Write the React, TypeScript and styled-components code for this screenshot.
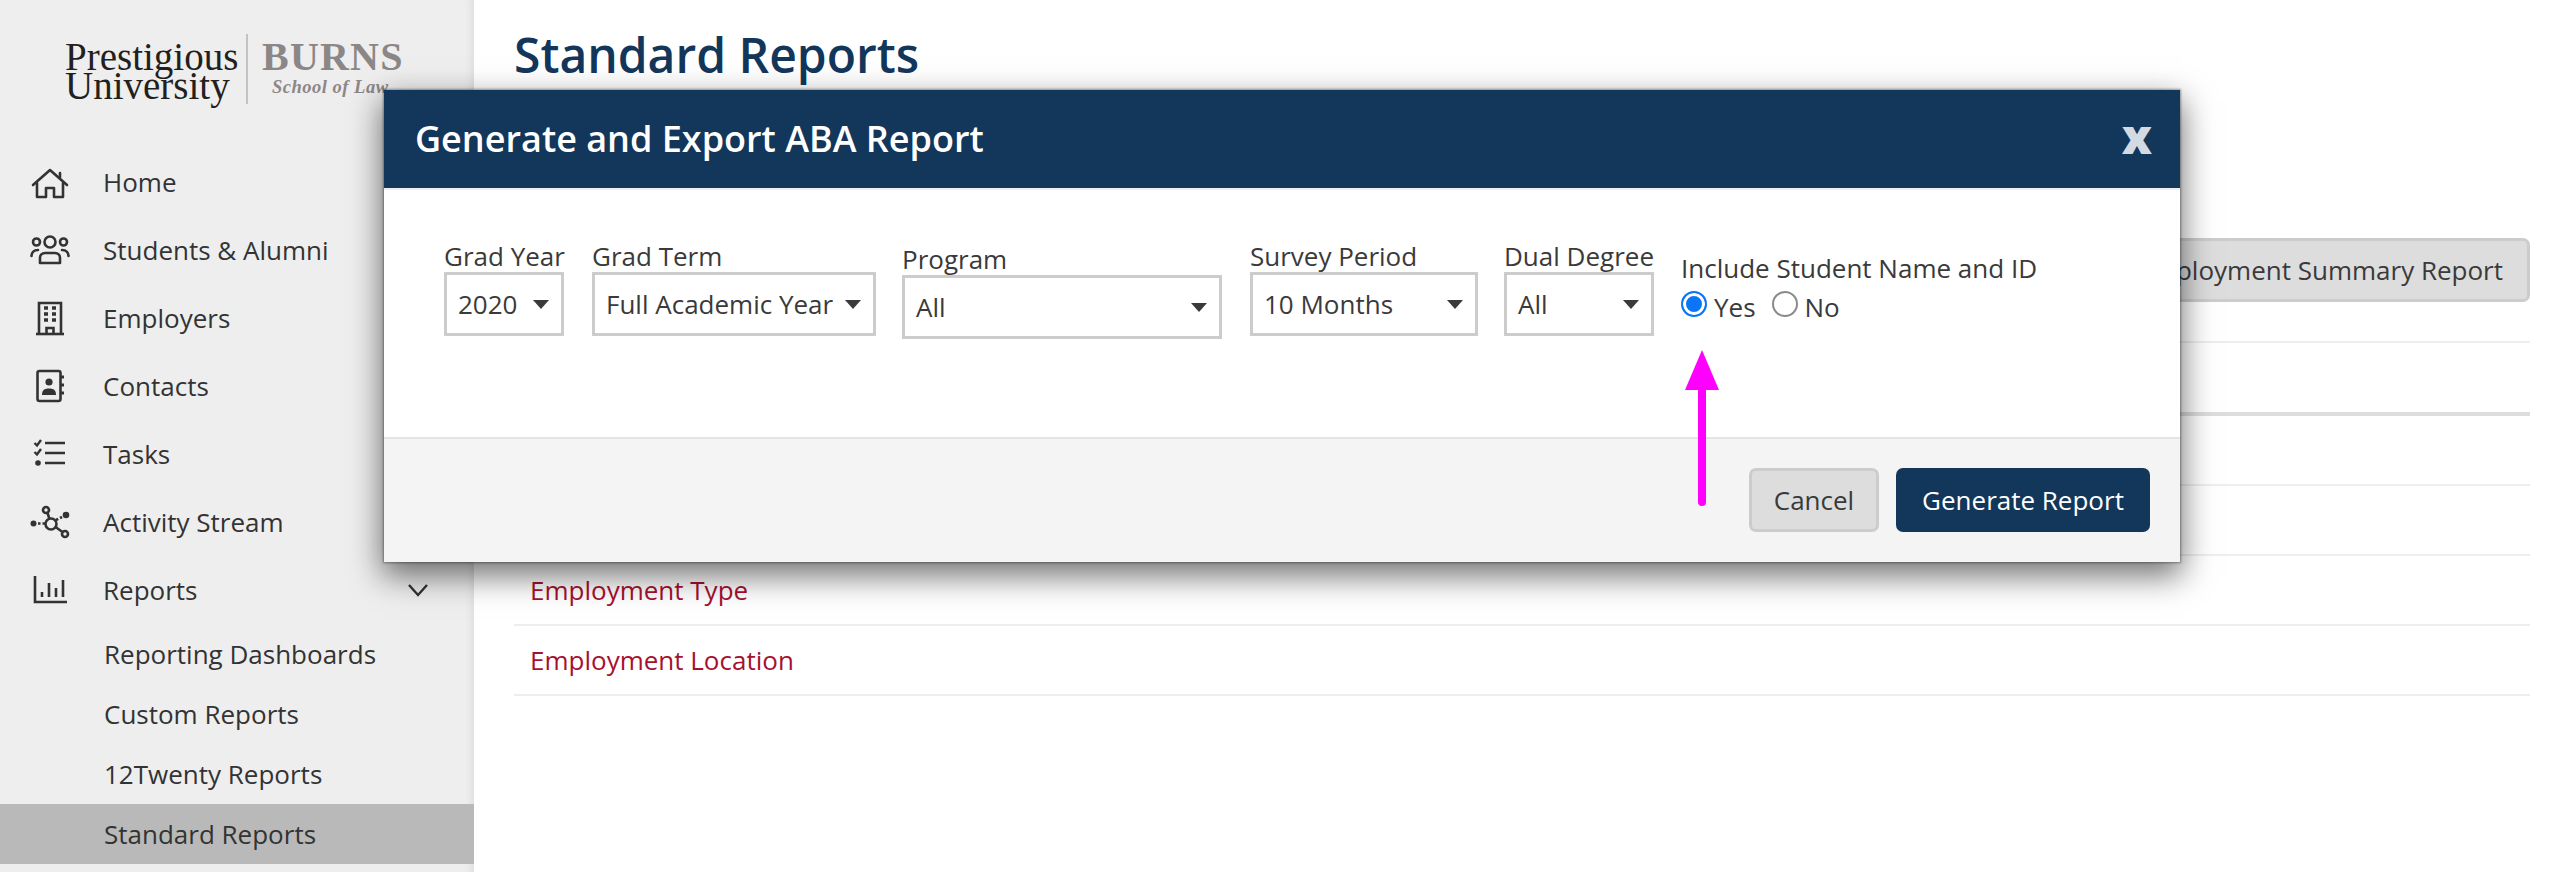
import React from "react";
import styled, { createGlobalStyle } from "styled-components";

const Global = createGlobalStyle`
  html, body { margin: 0; padding: 0; background: #fff; }
  body { font-family: "Open Sans", "Liberation Sans", sans-serif; color: #3a3a3a; }
  * { box-sizing: border-box; }
`;

const Page = styled.div`
  position: relative;
  display: grid;
  grid-template-columns: 474px 1fr;
  width: 2570px;
  height: 872px;
  overflow: hidden;
`;

const Sidebar = styled.aside`
  background: #eee;
  box-shadow: inset -8px 0 8px -6px rgba(0, 0, 0, 0.08);
  display: flex;
  flex-direction: column;
`;

const Logo = styled.div`
  height: 148px;
  padding: 34px 0 0 65px;
  display: flex;
  align-items: flex-start;
`;

const LogoUniversity = styled.div`
  font-family: "Liberation Serif", serif;
  font-size: 39px;
  line-height: 29px;
  color: #231f20;
  padding: 8px 0 0 0;
  width: 183px;
  height: 70px;
  border-right: 2px solid #c4c2c2;
  white-space: nowrap;
`;

const LogoSchool = styled.div`
  font-family: "Liberation Serif", serif;
  padding-left: 14px;
  white-space: nowrap;
`;

const LogoBurns = styled.div`
  font-weight: 700;
  font-size: 40px;
  line-height: 38px;
  letter-spacing: 1.2px;
  color: #8c8787;
  margin-top: 4px;
`;

const LogoLaw = styled.div`
  font-style: italic;
  font-weight: 700;
  font-size: 18.5px;
  line-height: 22px;
  letter-spacing: 0.5px;
  color: #8c8787;
  padding-left: 10px;
`;

const Nav = styled.nav`
  display: flex;
  flex-direction: column;
`;

const NavRow = styled.div`
  height: 68px;
  display: flex;
  align-items: center;
  padding-left: 30px;
  font-size: 26px;
  color: #333;
`;

const NavIconBox = styled.span`
  width: 40px;
  height: 36px;
  margin-right: 33px;
  flex: none;
  svg { display: block; }
`;

const NavChevron = styled.svg`
  margin-left: auto;
  margin-right: 45px;
`;

const SubRow = styled.div<{ $active?: boolean }>`
  height: 60px;
  display: flex;
  align-items: center;
  padding-left: 104px;
  font-size: 26px;
  color: #333;
  background: ${(p) => (p.$active ? "#b9b9b9" : "transparent")};
`;

const Main = styled.main`
  padding: 0 40px;
  display: flex;
  flex-direction: column;
`;

const Title = styled.h1`
  margin: 0;
  height: 238px;
  padding-top: 24px;
  font-size: 48px;
  line-height: 62px;
  font-weight: 600;
  color: #13365b;
`;

const Toolbar = styled.div`
  height: 105px;
  display: flex;
  justify-content: flex-end;
  align-items: flex-start;
  border-bottom: 2px solid #eee;
`;

const GrayButton = styled.button`
  height: 64px;
  padding: 0 24px;
  font: 400 26px "Open Sans", sans-serif;
  color: #3a3a3a;
  background: #ddd;
  border: 3px solid #ccc;
  border-radius: 7px;
`;

const HeaderRow = styled.div`
  height: 73px;
  border-bottom: 4px solid #ddd;
`;

const ReportRow = styled.div`
  height: 70px;
  display: flex;
  align-items: center;
  padding-left: 16px;
  font-size: 26px;
  color: #a6112f;
  border-bottom: 2px solid #eee;
`;

const Modal = styled.section`
  position: absolute;
  left: 384px;
  top: 90px;
  width: 1796px;
  height: 472px;
  background: #fff;
  display: flex;
  flex-direction: column;
  box-shadow: 0 0 2px 1px rgba(0, 0, 0, 0.35), 0 12px 30px 2px rgba(0, 0, 0, 0.55);
`;

const ModalHeader = styled.header`
  height: 100px;
  flex: none;
  padding: 0 28px 2px 31px;
  background: #13365b;
  border-bottom: 2px solid #eee;
  display: flex;
  align-items: center;
  justify-content: space-between;
`;

const ModalTitle = styled.h2`
  margin: 0;
  font-size: 36px;
  font-weight: 600;
  color: #fff;
`;

const CloseX = styled.span`
  font-family: "Open Sans", sans-serif;
  font-weight: 800;
  font-size: 48px;
  line-height: 48px;
  color: #d3dae3;
  margin-top: -5px;
`;

const ModalBody = styled.div`
  flex: 1;
  padding: 50px 0 0 60px;
  display: flex;
  align-items: flex-start;
`;

const Field = styled.div<{ $width: number; $after: number; $offset?: number }>`
  width: ${(p) => p.$width}px;
  margin-right: ${(p) => p.$after}px;
  margin-top: ${(p) => p.$offset ?? 0}px;
  flex: none;
`;

const FieldLabel = styled.div`
  font-size: 26px;
  line-height: 32px;
  color: #3a3a3a;
  white-space: nowrap;
`;

const SelectBox = styled.div`
  height: 64px;
  border: 3px solid #ccc;
  padding: 0 12px 0 11px;
  display: flex;
  align-items: center;
  justify-content: space-between;
  font-size: 26px;
  color: #3a3a3a;
  white-space: nowrap;
`;

const Caret = styled.span`
  width: 0;
  height: 0;
  flex: none;
  border-left: 8px solid transparent;
  border-right: 8px solid transparent;
  border-top: 9px solid #3a3a3a;
`;

const RadioGroup = styled.div`
  margin-top: 12px;
  flex: none;
`;

const RadioRow = styled.div`
  display: flex;
  align-items: center;
  height: 32px;
  margin-top: 7px;
  font-size: 26px;
  color: #3a3a3a;
`;

const RadioLabel = styled.label`
  display: flex;
  align-items: center;
  gap: 7px;
  margin-right: 16px;
`;

const RadioInput = styled.input`
  appearance: none;
  width: 26px;
  height: 26px;
  margin: -7px 0 0;
  border-radius: 50%;
  border: 2px solid #8a8a8a;
  background: #fff;
  &:checked {
    border: 2px solid #0b76f5;
    background: #0b76f5;
    box-shadow: inset 0 0 0 3px #fff;
  }
`;

const ModalFooter = styled.footer`
  height: 125px;
  flex: none;
  background: #f4f4f4;
  border-top: 2px solid #e4e4e4;
  padding: 29px 30px 0 0;
  display: flex;
  justify-content: flex-end;
  gap: 17px;
`;

const FooterCancel = styled(GrayButton)`
  width: 130px;
  padding: 0;
`;

const PrimaryButton = styled.button`
  width: 254px;
  height: 64px;
  font: 400 26px "Open Sans", sans-serif;
  color: #fff;
  background: #13365b;
  border: 0;
  border-radius: 7px;
`;

const PointerArrow = styled.svg`
  position: absolute;
  left: 1680px;
  top: 348px;
`;

const HomeIcon = () => (
  <svg width="40" height="36" viewBox="0 0 40 36" fill="none" stroke="#333" strokeWidth="2.6" strokeLinejoin="round" strokeLinecap="round">
    <path d="M3 21 20 6l17 15" />
    <path d="M30 9v4" />
    <path d="M7 19v14h9v-9h8v9h9V19" />
  </svg>
);

const PeopleIcon = () => (
  <svg width="40" height="36" viewBox="0 0 40 36" fill="none" stroke="#333" strokeWidth="2.6" strokeLinecap="round" strokeLinejoin="round">
    <circle cx="20" cy="10" r="5.5" />
    <circle cx="6.5" cy="10" r="3.5" />
    <circle cx="33.5" cy="10" r="3.5" />
    <path d="M1.5 24c0-3 2-6 6.5-6" />
    <path d="M38.5 24c0-3-2-6-6.5-6" />
    <path d="M10 29v-3c0-3 2-5 5-5h10c3 0 5 2 5 5v5H10z" />
  </svg>
);

const BuildingIcon = () => (
  <svg width="40" height="36" viewBox="0 0 40 36" fill="none" stroke="#333" strokeWidth="2.6">
    <path d="M9 34V3h22v31" />
    <path d="M6 34h28" />
    <path d="M16.5 34v-6h7v6" />
    <path d="M14 8h4M22 8h4M14 14h4M22 14h4M14 20h4M22 20h4" strokeWidth="3.4" />
  </svg>
);

const AddressIcon = () => (
  <svg width="40" height="36" viewBox="0 0 40 36" fill="none" stroke="#333" strokeWidth="2.6" strokeLinejoin="round">
    <rect x="7.5" y="3" width="23" height="30" rx="2" />
    <path d="M31 9h3M31 17h3M31 25h3" strokeWidth="3" />
    <circle cx="19" cy="14" r="3.6" fill="#333" stroke="none" />
    <path d="M12 27c0-4.500 2-6.500 7-6.500s7 2 7 6.500z" fill="#333" stroke="none" />
  </svg>
);

const TasksIcon = () => (
  <svg width="40" height="36" viewBox="0 0 40 36" fill="none" stroke="#333" strokeWidth="2.6">
    <path d="M4.500 7l2.500 2.500L11 4M4.500 16l2.500 2.500L11 13" strokeWidth="2.4" />
    <circle cx="8" cy="27" r="2.800" fill="#333" stroke="none" />
    <path d="M15 7h20M15 17h20M15 27h20" />
  </svg>
);

const ActivityIcon = () => (
  <svg width="40" height="36" viewBox="0 0 40 36" fill="none" stroke="#333" strokeWidth="2.6">
    <circle cx="3.500" cy="19.500" r="3" fill="#333" stroke="none" />
    <circle cx="16" cy="6" r="3" />
    <circle cx="36" cy="11" r="3.300" fill="#333" stroke="none" />
    <circle cx="35" cy="30" r="3" />
    <circle cx="21" cy="20" r="5.500" />
    <path d="M17.500 9l2 6M25.500 23l7 5" />
    <path d="M8 19.500h7M26 16l6-3" strokeDasharray="2.500 2" />
  </svg>
);

const ChartIcon = () => (
  <svg width="40" height="36" viewBox="0 0 40 36" fill="none" stroke="#333" strokeWidth="2.6">
    <path d="M5 4v26h32" />
    <path d="M12 20v5M19 11v14M26 16v9M33 8v17" />
  </svg>
);

export default function App() {
  return (
    <Page>
      <Global />
      <Sidebar>
        <Logo>
          <LogoUniversity>
            Prestigious
            <br />
            University
          </LogoUniversity>
          <LogoSchool>
            <LogoBurns>BURNS</LogoBurns>
            <LogoLaw>School of Law</LogoLaw>
          </LogoSchool>
        </Logo>
        <Nav>
          <NavRow><NavIconBox><HomeIcon /></NavIconBox>Home</NavRow>
          <NavRow><NavIconBox><PeopleIcon /></NavIconBox>Students &amp; Alumni</NavRow>
          <NavRow><NavIconBox><BuildingIcon /></NavIconBox>Employers</NavRow>
          <NavRow><NavIconBox><AddressIcon /></NavIconBox>Contacts</NavRow>
          <NavRow><NavIconBox><TasksIcon /></NavIconBox>Tasks</NavRow>
          <NavRow><NavIconBox><ActivityIcon /></NavIconBox>Activity Stream</NavRow>
          <NavRow>
            <NavIconBox><ChartIcon /></NavIconBox>Reports
            <NavChevron width="22" height="14" viewBox="0 0 22 14" fill="none" stroke="#333" strokeWidth="2.4">
              <path d="M2 2l9 10 9-10" />
            </NavChevron>
          </NavRow>
          <SubRow>Reporting Dashboards</SubRow>
          <SubRow>Custom Reports</SubRow>
          <SubRow>12Twenty Reports</SubRow>
          <SubRow $active>Standard Reports</SubRow>
        </Nav>
      </Sidebar>
      <Main>
        <Title>Standard Reports</Title>
        <Toolbar>
          <GrayButton>Employment Summary Report</GrayButton>
        </Toolbar>
        <HeaderRow />
        <ReportRow />
        <ReportRow />
        <ReportRow>Employment Type</ReportRow>
        <ReportRow>Employment Location</ReportRow>
      </Main>
      <Modal>
        <ModalHeader>
          <ModalTitle>Generate and Export ABA Report</ModalTitle>
          <CloseX>x</CloseX>
        </ModalHeader>
        <ModalBody>
          <Field $width={120} $after={28}>
            <FieldLabel>Grad Year</FieldLabel>
            <SelectBox>2020<Caret /></SelectBox>
          </Field>
          <Field $width={284} $after={26}>
            <FieldLabel>Grad Term</FieldLabel>
            <SelectBox>Full Academic Year<Caret /></SelectBox>
          </Field>
          <Field $width={320} $after={28} $offset={3}>
            <FieldLabel>Program</FieldLabel>
            <SelectBox>All<Caret /></SelectBox>
          </Field>
          <Field $width={228} $after={26}>
            <FieldLabel>Survey Period</FieldLabel>
            <SelectBox>10 Months<Caret /></SelectBox>
          </Field>
          <Field $width={150} $after={27}>
            <FieldLabel>Dual Degree</FieldLabel>
            <SelectBox>All<Caret /></SelectBox>
          </Field>
          <RadioGroup>
            <FieldLabel>Include Student Name and ID</FieldLabel>
            <RadioRow>
              <RadioLabel><RadioInput type="radio" name="include" defaultChecked />Yes</RadioLabel>
              <RadioLabel><RadioInput type="radio" name="include" />No</RadioLabel>
            </RadioRow>
          </RadioGroup>
        </ModalBody>
        <ModalFooter>
          <FooterCancel>Cancel</FooterCancel>
          <PrimaryButton>Generate Report</PrimaryButton>
        </ModalFooter>
      </Modal>
      <PointerArrow width="44" height="162" viewBox="0 0 44 162" aria-hidden="true">
        <path d="M22 2 39 42H5z" fill="#f0f" />
        <path d="M22 40v114" stroke="#f0f" strokeWidth="8" strokeLinecap="round" />
      </PointerArrow>
    </Page>
  );
}
